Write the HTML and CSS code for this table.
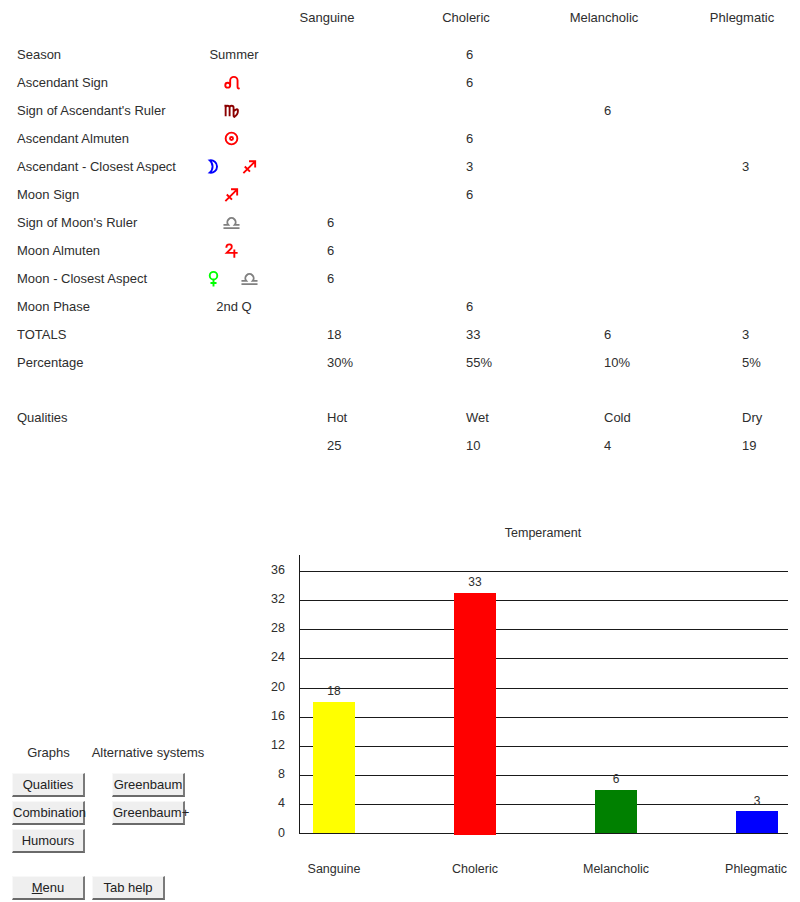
FILE: index.html
```html
<!DOCTYPE html>
<html>
<head>
<meta charset="utf-8">
<title>Temperament</title>
<link rel="stylesheet" href="styles.css">
</head>
<body>
<svg class="defs" width="0" height="0" xmlns="http://www.w3.org/2000/svg">
  <defs>
    <symbol id="leo" viewBox="0 0 18 18"><circle cx="5" cy="11.8" r="2.6"/><path d="M7.6,12 V7 A3.9,3.9 0 0 1 15.4,7 V13.5 Q15.4,16 17.6,15"/></symbol>
    <symbol id="virgo" viewBox="0 0 18 18"><path d="M1.5,4 H2.8 V15 M2.8,6 Q2.8,4 4.9,4 Q7,4 7,6 V15 M7,6 Q7,4 9.1,4 Q11.2,4 11.2,6 V14.5 Q11.2,16 13,15.8 M11.2,10 Q15.8,5.5 15.8,9.5 Q15.8,13.5 12,15.6"/></symbol>
    <symbol id="sun" viewBox="0 0 18 18"><circle cx="9" cy="9" r="6.2"/><circle cx="9" cy="9" r="1.6" class="dot"/></symbol>
    <symbol id="moon" viewBox="0 0 18 18"><path d="M5,2.5 A6.6,6.6 0 1 1 5,15.5 A8.5,8.5 0 0 0 5,2.5 Z"/></symbol>
    <symbol id="sag" viewBox="0 0 18 18"><path d="M2.5,16 L15,3.5 M8.5,3.5 H15 V10 M4,9 L9.5,14.5"/></symbol>
    <symbol id="libra" viewBox="0 0 18 18"><path d="M0.5,15 H17.5 M0.5,11.5 H5.6 A4.4,4.4 0 1 1 12.4,11.5 H17.5"/></symbol>
    <symbol id="jupiter" viewBox="0 0 18 18"><path d="M3.5,6 Q3.5,2.5 6.8,2.5 Q10,2.5 9,6.5 L4,11.5 H15.5 M12,8 V16.8"/></symbol>
    <symbol id="venus" viewBox="0 0 18 18"><circle cx="9" cy="6" r="4"/><path d="M9,10 V17.5 M5.8,13.8 H12.2"/></symbol>
  </defs>
</svg>
<div class="page">
  <section class="table">
    <div class="row head">
      <div class="lbl"></div><div class="sym"></div><div class="sp"></div>
      <div class="val"><span class="hc">Sanguine</span></div>
      <div class="val"><span class="hc">Choleric</span></div>
      <div class="val"><span class="hc">Melancholic</span></div>
      <div class="val"><span class="hc">Phlegmatic</span></div>
    </div>
    <div class="row"><div class="lbl">Season</div><div class="sym">Summer</div><div class="sp"></div><div class="val"></div><div class="val">6</div><div class="val"></div><div class="val"></div></div>
    <div class="row"><div class="lbl">Ascendant Sign</div><div class="sym ic"><svg class="g red"><use href="#leo"/></svg></div><div class="sp"></div><div class="val"></div><div class="val">6</div><div class="val"></div><div class="val"></div></div>
    <div class="row"><div class="lbl">Sign of Ascendant's Ruler</div><div class="sym ic"><svg class="g maroon"><use href="#virgo"/></svg></div><div class="sp"></div><div class="val"></div><div class="val"></div><div class="val">6</div><div class="val"></div></div>
    <div class="row"><div class="lbl">Ascendant Almuten</div><div class="sym ic"><svg class="g red"><use href="#sun"/></svg></div><div class="sp"></div><div class="val"></div><div class="val">6</div><div class="val"></div><div class="val"></div></div>
    <div class="row"><div class="lbl">Ascendant - Closest Aspect</div><div class="sym ic pair"><svg class="g blue"><use href="#moon"/></svg><svg class="g red"><use href="#sag"/></svg></div><div class="sp"></div><div class="val"></div><div class="val">3</div><div class="val"></div><div class="val">3</div></div>
    <div class="row"><div class="lbl">Moon Sign</div><div class="sym ic"><svg class="g red"><use href="#sag"/></svg></div><div class="sp"></div><div class="val"></div><div class="val">6</div><div class="val"></div><div class="val"></div></div>
    <div class="row"><div class="lbl">Sign of Moon's Ruler</div><div class="sym ic"><svg class="g gray"><use href="#libra"/></svg></div><div class="sp"></div><div class="val">6</div><div class="val"></div><div class="val"></div><div class="val"></div></div>
    <div class="row"><div class="lbl">Moon Almuten</div><div class="sym ic"><svg class="g red"><use href="#jupiter"/></svg></div><div class="sp"></div><div class="val">6</div><div class="val"></div><div class="val"></div><div class="val"></div></div>
    <div class="row"><div class="lbl">Moon - Closest Aspect</div><div class="sym ic pair"><svg class="g lime"><use href="#venus"/></svg><svg class="g gray"><use href="#libra"/></svg></div><div class="sp"></div><div class="val">6</div><div class="val"></div><div class="val"></div><div class="val"></div></div>
    <div class="row"><div class="lbl">Moon Phase</div><div class="sym">2nd Q</div><div class="sp"></div><div class="val"></div><div class="val">6</div><div class="val"></div><div class="val"></div></div>
    <div class="row"><div class="lbl">TOTALS</div><div class="sym"></div><div class="sp"></div><div class="val">18</div><div class="val">33</div><div class="val">6</div><div class="val">3</div></div>
    <div class="row"><div class="lbl">Percentage</div><div class="sym"></div><div class="sp"></div><div class="val">30%</div><div class="val">55%</div><div class="val">10%</div><div class="val">5%</div></div>
    <div class="row blank"></div>
    <div class="row"><div class="lbl">Qualities</div><div class="sym"></div><div class="sp"></div><div class="val">Hot</div><div class="val">Wet</div><div class="val">Cold</div><div class="val">Dry</div></div>
    <div class="row"><div class="lbl"></div><div class="sym"></div><div class="sp"></div><div class="val">25</div><div class="val">10</div><div class="val">4</div><div class="val">19</div></div>
  </section>

  <section class="bottom">
    <div class="controls">
      <div class="btn-grid">
        <div class="cap">Graphs</div>
        <div class="cap">Alternative systems</div>
        <button class="btn">Qualities</button>
        <button class="btn">Greenbaum</button>
        <button class="btn">Combination</button>
        <button class="btn">Greenbaum+</button>
        <button class="btn">Humours</button>
      </div>
      <div class="menu-row">
        <button class="btn"><u>M</u>enu</button>
        <button class="btn">Tab help</button>
      </div>
    </div>
    <svg class="chart" width="550" height="392" viewBox="0 0 550 392" xmlns="http://www.w3.org/2000/svg">
      <text class="title" x="293" y="27" text-anchor="middle">Temperament</text>
      <g class="grid">
        <line x1="49" y1="61.5" x2="538" y2="61.5"/>
        <line x1="49" y1="90.5" x2="538" y2="90.5"/>
        <line x1="49" y1="119.5" x2="538" y2="119.5"/>
        <line x1="49" y1="148.5" x2="538" y2="148.5"/>
        <line x1="49" y1="178.5" x2="538" y2="178.5"/>
        <line x1="49" y1="207.5" x2="538" y2="207.5"/>
        <line x1="49" y1="236.5" x2="538" y2="236.5"/>
        <line x1="49" y1="265.5" x2="538" y2="265.5"/>
        <line x1="49" y1="294.5" x2="538" y2="294.5"/>
        <line x1="49" y1="323.5" x2="538" y2="323.5"/>
        <line x1="49.5" y1="45" x2="49.5" y2="324"/>
      </g>
      <g class="ylab" text-anchor="end">
        <text x="35" y="64">36</text>
        <text x="35" y="93">32</text>
        <text x="35" y="122">28</text>
        <text x="35" y="151">24</text>
        <text x="35" y="181">20</text>
        <text x="35" y="210">16</text>
        <text x="35" y="239">12</text>
        <text x="35" y="268">8</text>
        <text x="35" y="297">4</text>
        <text x="35" y="327">0</text>
      </g>
      <rect x="63" y="192" width="42" height="131" fill="#ffff00"/>
      <rect x="204" y="83" width="42" height="242" fill="#ff0000"/>
      <rect x="345" y="280" width="42" height="43" fill="#008000"/>
      <rect x="486" y="301" width="42" height="22" fill="#0000ff"/>
      <g class="vlab" text-anchor="middle">
        <text x="84" y="185">18</text>
        <text x="225" y="76">33</text>
        <text x="366" y="273">6</text>
        <text x="507" y="295">3</text>
      </g>
      <g class="xlab" text-anchor="middle">
        <text x="84" y="363">Sanguine</text>
        <text x="225" y="363">Choleric</text>
        <text x="366" y="363">Melancholic</text>
        <text x="506" y="363">Phlegmatic</text>
      </g>
    </svg>
  </section>
</div>
</body>
</html>
```
FILE: styles.css
```css
html, body {
  margin: 0;
  padding: 0;
  background: #ffffff;
}
body {
  font-family: "Liberation Sans", Arial, sans-serif;
  font-size: 13px;
  color: #2e2e2e;
  overflow: hidden;
}
.defs {
  position: absolute;
  width: 0;
  height: 0;
}
.page {
  width: 800px;
  height: 902px;
  display: flex;
  flex-direction: column;
}
.table {
  padding-top: 3px;
}
.row {
  display: grid;
  grid-template-columns: 173px 88px 49px 139px 138px 138px 1fr;
  padding-left: 17px;
  height: 28px;
  align-items: center;
}
.row.head {
  margin-bottom: 9px;
}
.row.blank {
  height: 27px;
}
.sym {
  display: flex;
  justify-content: center;
  align-items: center;
  white-space: nowrap;
}
.sym.ic {
  padding-right: 6px;
}
.sym.pair {
  gap: 19px;
}
.val {
  white-space: nowrap;
}
.head .val {
  display: flex;
  justify-content: center;
  width: 0;
}
.hc {
  white-space: nowrap;
}
.g {
  display: block;
  width: 17px;
  height: 17px;
  fill: none;
  stroke: currentColor;
  stroke-width: 2;
}
.g .dot {
  fill: currentColor;
  stroke: none;
}
.red { color: #ff0000; }
.maroon { color: #8b0000; }
.blue { color: #0000ff; }
.gray { color: #808080; }
.lime { color: #00ff00; }

.bottom {
  margin-top: auto;
  display: flex;
  height: 392px;
}
.controls {
  width: 250px;
  display: flex;
  flex-direction: column;
  justify-content: flex-end;
  padding-left: 12px;
  padding-bottom: 2px;
  box-sizing: border-box;
}
.btn-grid {
  display: grid;
  grid-template-columns: 73px 72px;
  column-gap: 27px;
  row-gap: 4px;
}
.cap {
  justify-self: center;
  white-space: nowrap;
  height: 20px;
  line-height: 20px;
  margin-bottom: 6px;
}
.btn {
  font-family: "Liberation Sans", Arial, sans-serif;
  font-size: 13px;
  color: #222222;
  background: #efefef;
  width: 73px;
  height: 24px;
  padding: 0;
  box-sizing: border-box;
  border-style: solid;
  border-width: 1px 2px 2px 1px;
  border-color: #f8f8f8 #7a7a7a #6a6a6a #f8f8f8;
  white-space: nowrap;
  overflow: visible;
}
.menu-row {
  display: flex;
  gap: 7px;
  margin-top: 23px;
}
.chart {
  display: block;
  font-family: "Liberation Sans", Arial, sans-serif;
}
.chart text {
  fill: #2e2e2e;
  font-size: 12px;
}
.chart .ylab text {
  font-size: 12.5px;
}
.chart .xlab text, .chart .title {
  font-size: 12.5px;
}
.chart .grid line {
  stroke: #1a1a1a;
  stroke-width: 1;
  shape-rendering: crispEdges;
}
```
